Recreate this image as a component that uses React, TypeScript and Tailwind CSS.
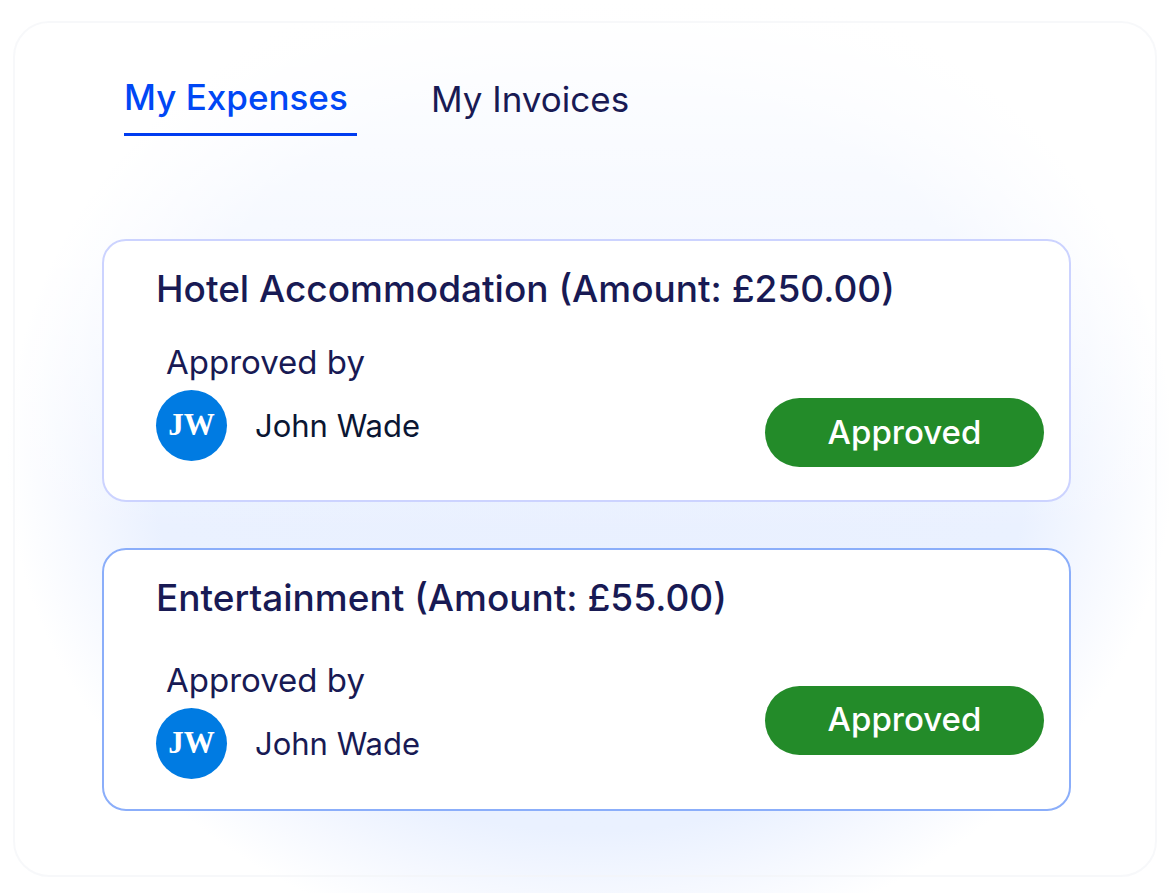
type Expense = {
  title: string;
  approver: string;
  initials: string;
  card: string;
  row: string;
  person: string;
  name: string;
};

const expenses: Expense[] = [
  {
    title: "Hotel Accommodation (Amount: £250.00)",
    approver: "John Wade",
    initials: "JW",
    card: "border-[#ccd3ff] pb-[33px]",
    row: "mt-8 items-end",
    person: "pb-[6px]",
    name: "text-[#0a1633]",
  },
  {
    title: "Entertainment (Amount: £55.00)",
    approver: "John Wade",
    initials: "JW",
    card: "border-[#8baefa] pb-[30px]",
    row: "mt-[41px] items-center",
    person: "",
    name: "text-[#181a54]",
  },
];

function ExpenseCard({ expense }: { expense: Expense }) {
  return (
    <article className={`rounded-3xl border-2 bg-white pt-[26px] pr-[25px] pl-[52px] ${expense.card}`}>
      <h2 className="text-[37px] leading-[44px] font-medium">{expense.title}</h2>
      <div className={`flex justify-between ${expense.row}`}>
        <div className={expense.person}>
          <p className="pl-[10px] text-[33px] leading-[38px]">Approved by</p>
          <div className="mt-[9px] flex items-center gap-7">
            <span className="flex size-[71px] items-center justify-center rounded-full bg-[#007be2] font-['Liberation_Serif',serif] text-[31px] font-bold text-white">
              {expense.initials}
            </span>
            <span className={`text-[31px] leading-[38px] ${expense.name}`}>{expense.approver}</span>
          </div>
        </div>
        <span className="flex h-[69px] w-[279px] items-center justify-center rounded-full bg-[#238b29] pb-[2px] text-[33px] leading-[38px] font-medium text-white">
          Approved
        </span>
      </div>
    </article>
  );
}

export default function App() {
  return (
    <main className="min-h-screen bg-white bg-[linear-gradient(to_bottom,#ffffff_0%,#ffffff00_60%),radial-gradient(48%_54%_at_50.5%_51%,#e9f0ff_0%,#eaf1ff_78%,#f5f8ff_91%,#ffffff_104%)] pt-[21px] pr-3 pb-4 pl-[13px] font-['Inter',sans-serif] text-[#181a54]">
      <section className="rounded-[36px] border-2 border-[#f4f5f8]/70 pt-[52px] pr-[84px] pb-16 pl-[87px]">
        <nav className="flex items-center gap-[74px] pl-[22px]">
          <button type="button" className="w-[233px] border-b-[3px] border-[#003cf0] pb-[14px] text-left text-[35px] leading-[44px] font-medium text-[#0047f5]">
            My Expenses
          </button>
          <button type="button" className="pb-[13px] text-[35px] leading-[44px]">
            My Invoices
          </button>
        </nav>
        <div className="mt-[103px] flex flex-col gap-[46px]">
          {expenses.map((expense) => (
            <ExpenseCard key={expense.title} expense={expense} />
          ))}
        </div>
      </section>
    </main>
  );
}
